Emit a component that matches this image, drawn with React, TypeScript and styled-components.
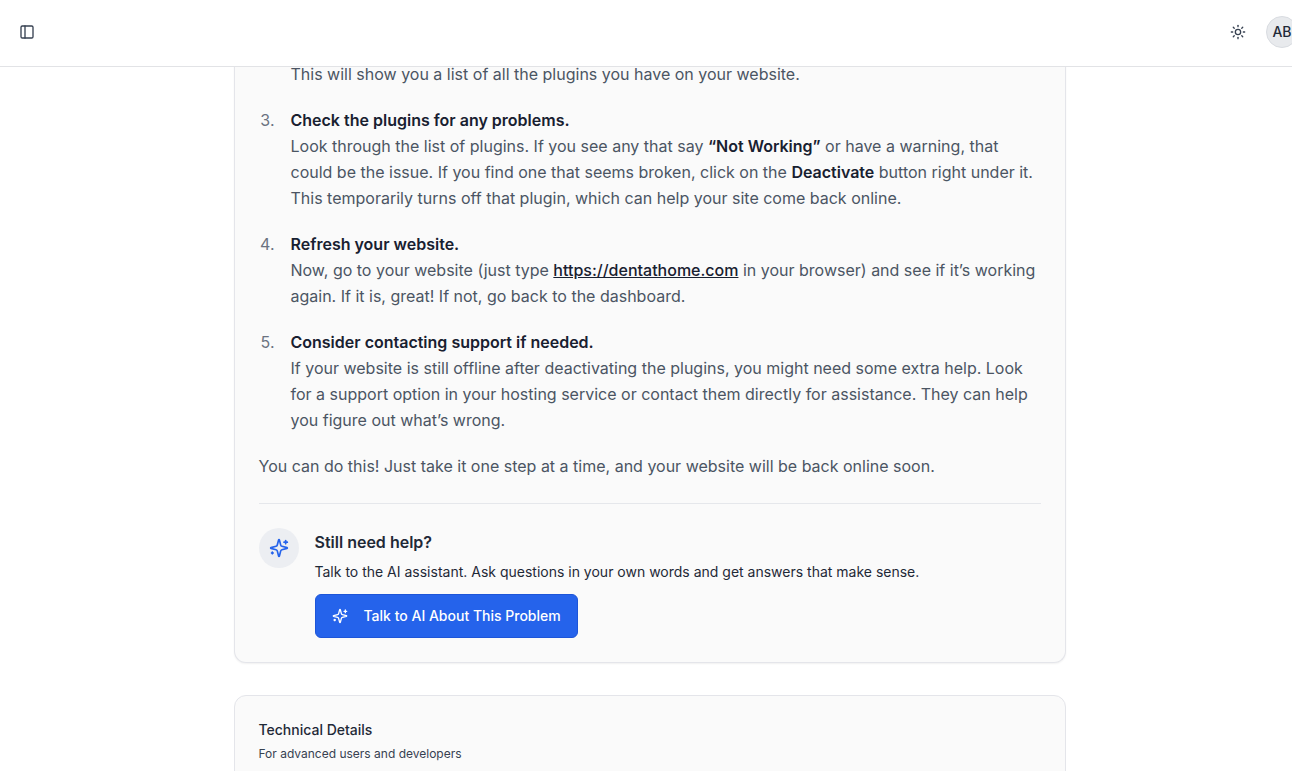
import React from "react";
import styled, { createGlobalStyle } from "styled-components";
import { PanelLeft, Sun } from "lucide-react";

const GlobalStyle = createGlobalStyle`
  *, *::before, *::after { box-sizing: border-box; }
  body {
    margin: 0;
    background: #ffffff;
    color: #1f2937;
    font-family: Inter, "Liberation Sans", sans-serif;
    font-size: 16px;
    line-height: 26px;
  }
  h2, h3, p, ol { margin: 0; padding: 0; }
`;

const Page = styled.div`
  height: 100vh;
  overflow: hidden;
`;

const Header = styled.header`
  position: sticky;
  top: 0;
  z-index: 10;
  display: flex;
  align-items: center;
  justify-content: space-between;
  height: 67px;
  padding: 0 0 2px 15px;
  background: #ffffff;
  border-bottom: 1px solid #e2e3e6;
`;

const HeaderActions = styled.div`
  display: flex;
  align-items: center;
  gap: 16px;
  margin-right: -6px;
`;

const IconButton = styled.button`
  display: flex;
  align-items: center;
  justify-content: center;
  width: 24px;
  height: 24px;
  padding: 0;
  border: 0;
  background: transparent;
  color: #374151;
`;

const Avatar = styled.button`
  display: flex;
  align-items: center;
  justify-content: center;
  width: 32px;
  height: 32px;
  padding: 0;
  border: 1px solid #d9dce1;
  border-radius: 50%;
  background: #e8eaed;
  color: #1f2937;
  font: 500 14px/20px Inter, sans-serif;
`;

const Main = styled.main`
  display: flex;
  flex-direction: column;
  gap: 32px;
  width: 100%;
  max-width: 839px;
  margin: -6px auto 0;
  padding-left: 7px;
`;

const Card = styled.section<{ $continued?: boolean }>`
  padding: ${(p) => (p.$continued ? "0 24px 24px" : "24px")};
  background: #fafafa;
  border: 1px solid #e4e5ea;
  border-top-width: ${(p) => (p.$continued ? "0" : "1px")};
  border-radius: ${(p) => (p.$continued ? "0 0 12px 12px" : "12px")};
  box-shadow: ${(p) => (p.$continued ? "0 1px 2px rgba(0, 0, 0, 0.06)" : "none")};
`;

const Steps = styled.ol`
  display: flex;
  flex-direction: column;
  gap: 20px;
  list-style: none;
  color: #4b5563;
`;

const Step = styled.li`
  display: grid;
  grid-template-columns: 16px 1fr;
  column-gap: 16px;
`;

const StepNumber = styled.span`
  color: #6b7280;
  text-align: right;
  white-space: nowrap;
`;

const Strong = styled.strong`
  color: #182030;
  font-weight: 600;
`;

const StepTitle = styled(Strong)`
  display: block;
`;

const SiteLink = styled.a`
  color: #182030;
  font-weight: 500;
  text-decoration: underline;
`;

const Closing = styled.p`
  margin-top: 20px;
  color: #4b5563;
`;

const Help = styled.div`
  display: flex;
  gap: 16px;
  margin-top: 24px;
  padding-top: 24px;
  border-top: 1px solid #e5e7eb;
`;

const HelpIcon = styled.div`
  display: flex;
  align-items: center;
  justify-content: center;
  width: 40px;
  height: 40px;
  border-radius: 50%;
  background: #eceef2;
  color: #2563eb;
`;

const HelpBody = styled.div`
  display: flex;
  flex-direction: column;
  align-items: flex-start;
`;

const HelpTitle = styled.h2`
  font-size: 16px;
  line-height: 28px;
  font-weight: 600;
`;

const HelpText = styled.p`
  margin: 6px 0 12px;
  font-size: 14px;
  line-height: 20px;
`;

const PrimaryButton = styled.button`
  display: flex;
  align-items: center;
  gap: 16px;
  height: 44px;
  padding: 0 16px;
  border: 1px solid #1d55d8;
  border-radius: 6px;
  background: #2563eb;
  color: #ffffff;
  font: 500 14px/20px Inter, sans-serif;
`;

const DetailsTitle = styled.h3`
  font-size: 14px;
  line-height: 20px;
  font-weight: 500;
`;

const DetailsText = styled.p`
  margin-top: 4px;
  font-size: 12px;
  line-height: 20px;
  color: #374151;
`;

function SparklesIcon({ size }: { size: number }) {
  return (
    <svg
      width={size}
      height={size}
      viewBox="0 0 24 24"
      fill="none"
      stroke="currentColor"
      strokeWidth="2"
      strokeLinecap="round"
      strokeLinejoin="round"
      aria-hidden="true"
    >
      <path d="M9.937 15.5A2 2 0 0 0 8.5 14.063l-6.135-1.582a.5.5 0 0 1 0-.962L8.5 9.936A2 2 0 0 0 9.937 8.5l1.582-6.135a.5.5 0 0 1 .963 0L14.063 8.5A2 2 0 0 0 15.5 9.937l6.135 1.581a.5.5 0 0 1 0 .964L15.5 14.063a2 2 0 0 0-1.437 1.437l-1.582 6.135a.5.5 0 0 1-.963 0z" />
      <path d="M20 3v4" />
      <path d="M22 5h-4" />
      <path d="M4 17v2" />
      <path d="M5 18H3" />
    </svg>
  );
}

type StepItemProps = { number: number; title?: string; children: React.ReactNode };

function StepItem({ number, title, children }: StepItemProps) {
  return (
    <Step>
      <StepNumber>{title ? `${number}.` : ""}</StepNumber>
      <div>
        {title && <StepTitle>{title}</StepTitle>}
        {children}
      </div>
    </Step>
  );
}

export default function App() {
  return (
    <Page>
      <GlobalStyle />
      <Header>
        <IconButton type="button" aria-label="Toggle sidebar">
          <PanelLeft size={16} />
        </IconButton>
        <HeaderActions>
          <IconButton type="button" aria-label="Toggle theme">
            <Sun size={16} />
          </IconButton>
          <Avatar type="button">AB</Avatar>
        </HeaderActions>
      </Header>
      <Main>
        <Card $continued>
          <Steps>
            <StepItem number={2}>
              This will show you a list of all the plugins you have on your website.
            </StepItem>
            <StepItem number={3} title="Check the plugins for any problems.">
              Look through the list of plugins. If you see any that say <Strong>“Not Working”</Strong> or
              have a warning, that could be the issue. If you find one that seems broken, click on
              the <Strong>Deactivate</Strong> button right under it. This temporarily turns off that
              plugin, which can help your site come back online.
            </StepItem>
            <StepItem number={4} title="Refresh your website.">
              Now, go to your website (just type{" "}
              <SiteLink href="https://dentathome.com">https://dentathome.com</SiteLink> in your
              browser) and see if it’s working again. If it is, great! If not, go back to the
              dashboard.
            </StepItem>
            <StepItem number={5} title="Consider contacting support if needed.">
              If your website is still offline after deactivating the plugins, you might need some
              extra help. Look for a support option in your hosting service or contact them directly
              for assistance. They can help you figure out what’s wrong.
            </StepItem>
          </Steps>
          <Closing>
            You can do this! Just take it one step at a time, and your website will be back online
            soon.
          </Closing>
          <Help>
            <HelpIcon>
              <SparklesIcon size={20} />
            </HelpIcon>
            <HelpBody>
              <HelpTitle>Still need help?</HelpTitle>
              <HelpText>
                Talk to the AI assistant. Ask questions in your own words and get answers that make
                sense.
              </HelpText>
              <PrimaryButton type="button">
                <SparklesIcon size={16} />
                Talk to AI About This Problem
              </PrimaryButton>
            </HelpBody>
          </Help>
        </Card>
        <Card>
          <DetailsTitle>Technical Details</DetailsTitle>
          <DetailsText>For advanced users and developers</DetailsText>
        </Card>
      </Main>
    </Page>
  );
}
